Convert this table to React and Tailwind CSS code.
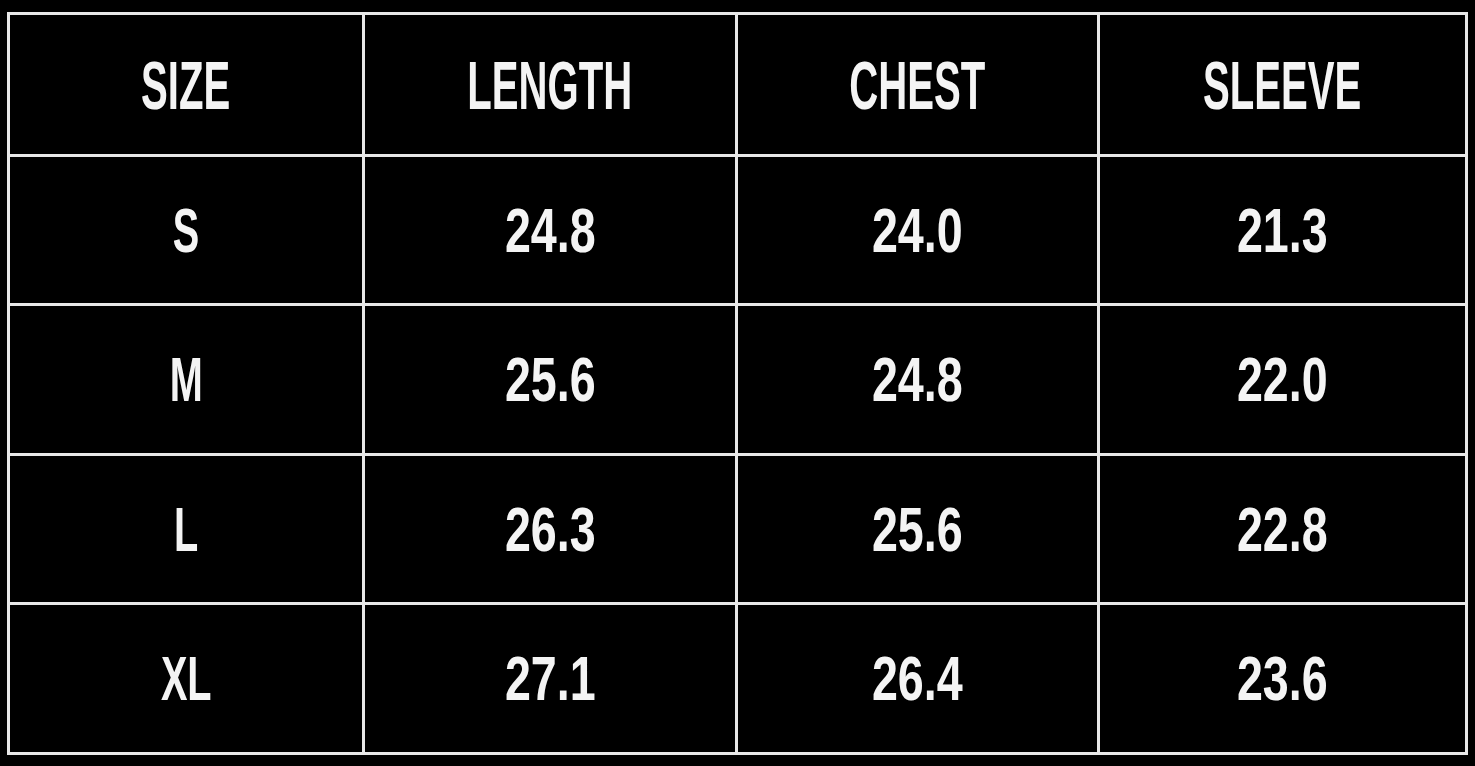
const headers = ["SIZE", "LENGTH", "CHEST", "SLEEVE"];
const rows = [
  ["S", "24.8", "24.0", "21.3"],
  ["M", "25.6", "24.8", "22.0"],
  ["L", "26.3", "25.6", "22.8"],
  ["XL", "27.1", "26.4", "23.6"],
];

export default function App() {
  return (
    <div
      className="w-[1475px] h-[766px] bg-black pl-[7px] pt-[12px] overflow-hidden"
      style={{ fontFamily: '"Liberation Sans", Arial, sans-serif' }}
    >
      <div className="inline-grid grid-cols-[352px_370px_359px_365px] grid-rows-[139px_146px_147px_146px_147px] gap-[3px] p-[3px] bg-[#e8e8e8]">
        {headers.map((h) => (
          <div key={h} className="bg-black flex items-center justify-center">
            <span className="text-[68px] font-bold leading-none text-[#f4f4f4] scale-x-[0.59] inline-block">
              {h}
            </span>
          </div>
        ))}
        {rows.map((r) =>
          r.map((c, i) => (
            <div key={r[0] + i} className="bg-black flex items-center justify-center">
              <span
                className={
                  i === 0
                    ? "text-[63px] font-bold leading-none text-[#f4f4f4] scale-x-[0.63] inline-block"
                    : "text-[63px] font-bold leading-none text-[#f4f4f4] scale-x-[0.74] inline-block"
                }
              >
                {c}
              </span>
            </div>
          ))
        )}
      </div>
    </div>
  );
}
